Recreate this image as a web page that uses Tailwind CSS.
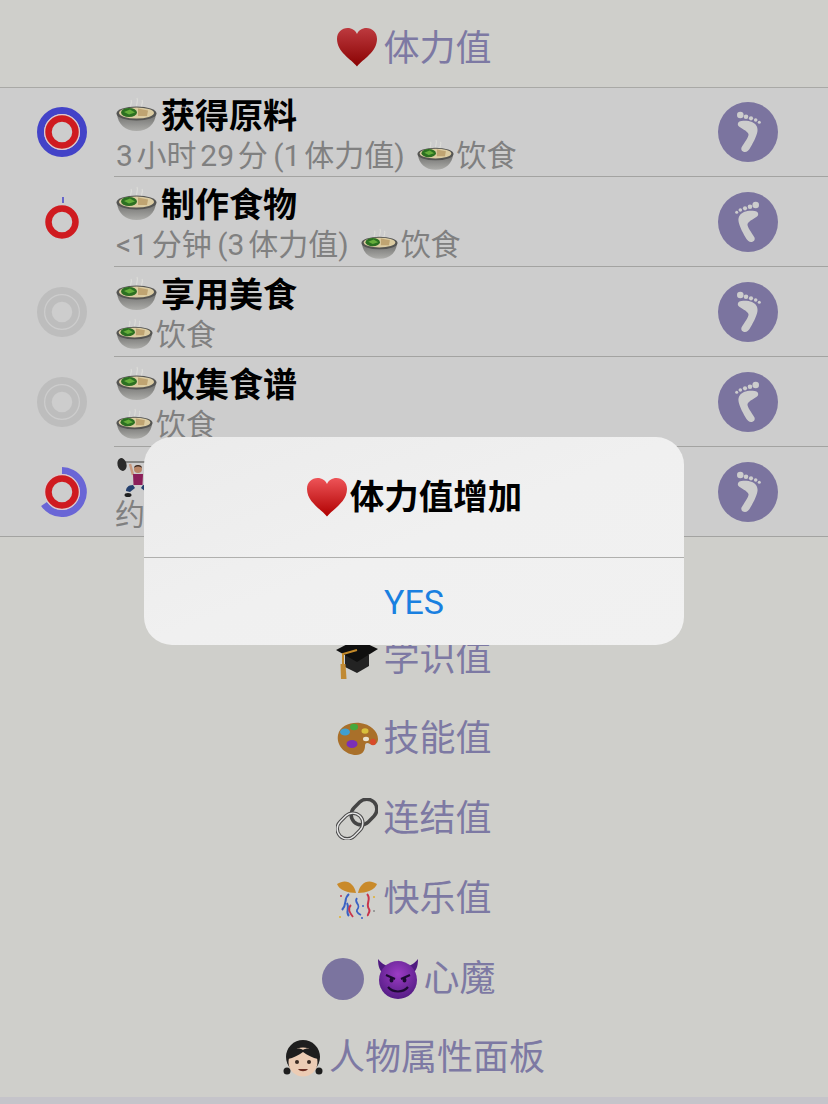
<!DOCTYPE html>
<html lang="zh">
<head>
  <meta charset="UTF-8" />
  <meta name="viewport" content="width=device-width, initial-scale=1" />
  <title>体力值</title>
  <script src="https://cdn.jsdelivr.net/npm/@tailwindcss/browser@4"></script>
</head>
<body class="relative w-[828px] h-[1104px] overflow-hidden bg-[#cfcfcb] font-['Roboto','Noto_Sans_CJK_SC',sans-serif] [text-autospace:normal]">

  <!-- shared emoji and icon drawings -->
  <svg class="absolute w-0 h-0" aria-hidden="true">
    <defs>
      <linearGradient id="heartDim" x1="0" y1="0" x2="0" y2="1"><stop offset="0" stop-color="#bd3a3f"/><stop offset="1" stop-color="#8a0202"/></linearGradient>
      <linearGradient id="heartLit" x1="0" y1="0" x2="0" y2="1"><stop offset="0" stop-color="#ee5458"/><stop offset="1" stop-color="#b00000"/></linearGradient>
      <linearGradient id="bowlBody" x1="0" y1="0" x2="0" y2="1"><stop offset="0" stop-color="#6e6e6c"/><stop offset="1" stop-color="#adadaa"/></linearGradient>
      <radialGradient id="devilFace" cx=".5" cy=".35" r=".7"><stop offset="0" stop-color="#9c3cc4"/><stop offset="1" stop-color="#4f1a80"/></radialGradient>
      <symbol id="heart" viewBox="0 0 42 40"><path d="M21 39.500C15 32 1 25 1 12C1 5 6 1 11.500 1C16 1 19.500 3.500 21 7C22.500 3.500 26 1 30.500 1C36 1 41 5 41 12C41 25 27 32 21 39.500Z"/></symbol>
      <symbol id="bowl" viewBox="0 0 41 34">
        <g fill="none" stroke="#dcdcd8" stroke-width="1.200"><path d="M15 11C13 8 17 6 15 3"/><path d="M21 11C19 7 23 5 21 1"/><path d="M26 11C24 8 28 6 26 3"/></g>
        <path d="M1 17C2 27 9 34 20.500 34C32 34 39 27 40 17Z" fill="url(#bowlBody)"/>
        <ellipse cx="20.500" cy="16.500" rx="20" ry="7" fill="#555553"/>
        <ellipse cx="20.500" cy="16" rx="17.500" ry="5.500" fill="#dccca2"/>
        <ellipse cx="13" cy="15.500" rx="8" ry="4.500" fill="#2b7021"/>
        <path d="M8 15L14 12.500L19 15.500L13 17.500Z" fill="#66ad3a"/>
        <path d="M22 11.500L32 13.500L31 19L22 19Z" fill="#bfa472"/>
      </symbol>
      <symbol id="foot" viewBox="0 0 60 60">
        <circle cx="22.300" cy="13" r="3.300"/><circle cx="28" cy="14.700" r="2.300"/><circle cx="33" cy="16.300" r="2.100"/><circle cx="37.700" cy="18" r="1.800"/><circle cx="41.300" cy="20.300" r="1.500"/>
        <path d="M21 19.700C19.500 21 19.500 23 20.500 24C23 26.500 29 28.500 30.500 32C31 35 26 41 23.500 45.500C22.500 48.500 25 50 27 50C29 50 30.500 48.500 31.500 47C34 43 39 34 39.500 29C40 24.500 37.500 21.500 34 20C30 18.500 24 18.500 21 19.700Z"/>
      </symbol>
    </defs>
  </svg>

  <header class="h-[88px] border-b border-[#a9a9a6] flex items-center justify-center gap-[5px] pt-[10px] text-[36px] leading-[48px] text-[#7d79a3]">
    <svg class="w-[42px] h-[40px] -mt-[4px]" fill="url(#heartDim)"><use href="#heart"/></svg>
    <span>体力值</span>
  </header>

  <main class="bg-[#cdcdcd] border-b border-[#a3a3a1]">
    <!-- row 1 -->
    <div class="h-[89px] flex">
      <div class="w-[114px] pl-[37px] flex items-center">
        <svg class="w-[50px] h-[50px] -mt-[1px]" viewBox="0 0 50 50" fill="none">
          <circle cx="25" cy="25" r="21.500" stroke="#4343c8" stroke-width="7"/>
          <circle cx="25" cy="25" r="17.500" stroke="#e3c6cc" stroke-width="1"/>
          <circle cx="25" cy="25" r="13.500" stroke="#cf1b20" stroke-width="6.500"/>
        </svg>
      </div>
      <div class="flex-1 border-b border-[#a3a3a1] flex">
        <div class="flex-1 pt-[8px]">
          <div class="flex items-end h-[40px] text-[34px] leading-[40px] font-bold text-black"><svg class="ml-[2px] mr-[4px] mb-[5px] w-[41px] h-[34px]"><use href="#bowl"/></svg>获得原料</div>
          <div class="flex items-center h-[38px] mt-[1px] pl-[2px] text-[30px] leading-[38px] text-[#808080] [word-spacing:-2px]">3小时29分 (1体力值)<svg class="ml-[12px] mr-[3px] -mt-[4px] w-[37px] h-[31px]"><use href="#bowl"/></svg>饮食</div>
        </div>
        <div class="pr-[50px] pt-[14px]">
          <svg class="w-[60px] h-[60px] rounded-full bg-[#7b749f]" fill="#cdcdcd"><use href="#foot"/></svg>
        </div>
      </div>
    </div>
    <!-- row 2 -->
    <div class="h-[90px] flex">
      <div class="w-[114px] pl-[37px] flex items-center">
        <svg class="w-[50px] h-[50px]" viewBox="0 0 50 50" fill="none">
          <path d="M26 0V6" stroke="#4343c8" stroke-width="1.500"/>
          <circle cx="25" cy="25" r="13.500" stroke="#cf1b20" stroke-width="6.500"/>
        </svg>
      </div>
      <div class="flex-1 border-b border-[#a3a3a1] flex">
        <div class="flex-1 pt-[8px]">
          <div class="flex items-end h-[40px] text-[34px] leading-[40px] font-bold text-black"><svg class="ml-[2px] mr-[4px] mb-[5px] w-[41px] h-[34px]"><use href="#bowl"/></svg>制作食物</div>
          <div class="flex items-center h-[38px] mt-[1px] pl-[2px] text-[30px] leading-[38px] text-[#808080] [word-spacing:-2px]">&lt;1分钟 (3体力值)<svg class="ml-[12px] mr-[3px] -mt-[4px] w-[37px] h-[31px]"><use href="#bowl"/></svg>饮食</div>
        </div>
        <div class="pr-[50px] pt-[15px]">
          <svg class="w-[60px] h-[60px] rounded-full bg-[#7b749f] -scale-x-100" fill="#cdcdcd"><use href="#foot"/></svg>
        </div>
      </div>
    </div>
    <!-- row 3 -->
    <div class="h-[90px] flex">
      <div class="w-[114px] pl-[37px] flex items-center">
        <svg class="w-[50px] h-[50px]" viewBox="0 0 50 50" fill="none">
          <circle cx="25" cy="25" r="21.500" stroke="#bdbdbd" stroke-width="7"/>
          <circle cx="25" cy="25" r="13.500" stroke="#bdbdbd" stroke-width="6.500"/>
        </svg>
      </div>
      <div class="flex-1 border-b border-[#a3a3a1] flex">
        <div class="flex-1 pt-[8px]">
          <div class="flex items-end h-[40px] text-[34px] leading-[40px] font-bold text-black"><svg class="ml-[2px] mr-[4px] mb-[5px] w-[41px] h-[34px]"><use href="#bowl"/></svg>享用美食</div>
          <div class="flex items-center h-[38px] mt-[1px] pl-[2px] text-[30px] leading-[38px] text-[#808080]"><svg class="mr-[3px] -mt-[4px] w-[37px] h-[31px]"><use href="#bowl"/></svg>饮食</div>
        </div>
        <div class="pr-[50px] pt-[15px]">
          <svg class="w-[60px] h-[60px] rounded-full bg-[#7b749f]" fill="#cdcdcd"><use href="#foot"/></svg>
        </div>
      </div>
    </div>
    <!-- row 4 -->
    <div class="h-[90px] flex">
      <div class="w-[114px] pl-[37px] flex items-center">
        <svg class="w-[50px] h-[50px]" viewBox="0 0 50 50" fill="none">
          <circle cx="25" cy="25" r="21.500" stroke="#bdbdbd" stroke-width="7"/>
          <circle cx="25" cy="25" r="13.500" stroke="#bdbdbd" stroke-width="6.500"/>
        </svg>
      </div>
      <div class="flex-1 border-b border-[#a3a3a1] flex">
        <div class="flex-1 pt-[8px]">
          <div class="flex items-end h-[40px] text-[34px] leading-[40px] font-bold text-black"><svg class="ml-[2px] mr-[4px] mb-[5px] w-[41px] h-[34px]"><use href="#bowl"/></svg>收集食谱</div>
          <div class="flex items-center h-[38px] mt-[1px] pl-[2px] text-[30px] leading-[38px] text-[#808080]"><svg class="mr-[3px] -mt-[4px] w-[37px] h-[31px]"><use href="#bowl"/></svg>饮食</div>
        </div>
        <div class="pr-[50px] pt-[15px]">
          <svg class="w-[60px] h-[60px] rounded-full bg-[#7b749f] -scale-x-100" fill="#cdcdcd"><use href="#foot"/></svg>
        </div>
      </div>
    </div>
    <!-- row 5, title is under the dialog -->
    <div class="h-[89px] flex">
      <div class="w-[114px] pl-[37px] flex items-center">
        <svg class="w-[50px] h-[50px]" viewBox="0 0 50 50" fill="none">
          <path d="M25 3.500A21.500 21.500 0 1 1 7 37" stroke="#6a66d6" stroke-width="7"/>
          <circle cx="25" cy="25" r="17.500" stroke="#e3c6cc" stroke-width="1"/>
          <circle cx="25" cy="25" r="13.500" stroke="#cf1b20" stroke-width="6.500"/>
        </svg>
      </div>
      <div class="flex-1 flex">
        <div class="flex-1 pt-[8px]">
          <div class="flex items-end h-[40px] ml-[2px]">
            <svg class="w-[48px] h-[40px] overflow-visible" viewBox="0 0 48 40">
              <g transform="translate(0 3)">
                <path d="M9 4H37" stroke="#6f6f6d" stroke-width="1.500"/>
                <ellipse cx="6" cy="6.500" rx="4.500" ry="6.500" fill="#2b2b2b" transform="rotate(-15 6 6.500)"/>
                <path d="M14 6L17 17M32 6L29 17" stroke="#c99a80" stroke-width="2.500"/>
                <circle cx="22" cy="11" r="4" fill="#b98668"/>
                <path d="M18 10C18 6 26 6 26 10C24 8 20 8 18 10Z" fill="#3a2a22"/>
                <path d="M17 16H27L26.500 27H17.500Z" fill="#8c1f5a"/>
                <path d="M17 27C12 27 10 30 10 33L14 34L19 30M27 27C32 27 34 30 34 33L30 34L25 30" fill="#24406e"/>
                <ellipse cx="12" cy="37" rx="3.500" ry="2" fill="#1f1f1f"/><ellipse cx="32" cy="37" rx="3.500" ry="2" fill="#1f1f1f"/>
              </g>
            </svg>
          </div>
          <div class="h-[38px] mt-[1px] pl-[1px] text-[30px] leading-[38px] text-[#808080]">约</div>
        </div>
        <div class="pr-[50px] pt-[15px]">
          <svg class="w-[60px] h-[60px] rounded-full bg-[#7b749f]" fill="#cdcdcd"><use href="#foot"/></svg>
        </div>
      </div>
    </div>
  </main>

  <section class="text-[36px] leading-[48px] text-[#7d79a3]">
    <div class="h-[82px]"></div>
    <div class="h-[80px] flex items-center justify-center gap-[5px]">
      <svg class="w-[42px] h-[40px]" viewBox="0 0 42 40">
        <path d="M9 16V28L21 34L33 27V16Z" fill="#232323"/>
        <path d="M21 0L42 10L21 23L0 11Z" fill="#0f0f0f"/>
        <path d="M21 11L7 15V26" fill="none" stroke="#c48a2a" stroke-width="2"/>
        <path d="M4.500 25H9.500L10.500 40H5Z" fill="#c08a34"/>
      </svg>
      <span>学识值</span>
    </div>
    <div class="h-[80px] flex items-center justify-center gap-[5px]">
      <svg class="w-[42px] h-[34px]" viewBox="0 0 42 34">
        <path d="M2 13C4 4 14 0 24 1C34 2 42 9 42 17C42 22 38 24 34 22C31 20 29 21 29 24C29 29 26 33 20 33C10 33 0 24 2 13Z" fill="#a9702a"/>
        <ellipse cx="9" cy="10" rx="5" ry="3.500" fill="#3f9fd0"/>
        <ellipse cx="18" cy="5" rx="4" ry="3.200" fill="#46a83c"/>
        <ellipse cx="29" cy="9" rx="3.500" ry="2.800" fill="#d8c03c"/>
        <ellipse cx="16" cy="22" rx="5.500" ry="4" fill="#7a2fb8"/>
        <ellipse cx="37" cy="20" rx="3" ry="3.200" fill="#d84a2a"/>
        <ellipse cx="30" cy="17" rx="3" ry="2.200" fill="#e8e2d0"/>
      </svg>
      <span>技能值</span>
    </div>
    <div class="h-[80px] flex items-center justify-center gap-[5px]">
      <svg class="w-[42px] h-[42px]" viewBox="0 0 42 42" fill="none">
        <rect x="14" y="4" width="28" height="20" rx="10" transform="rotate(-45 28 14)" stroke="#454545" stroke-width="3.500"/>
        <rect x="0" y="18" width="28" height="20" rx="10" transform="rotate(-45 14 28)" stroke="#4a4a4a" stroke-width="3.500"/>
        <rect x="0" y="18" width="28" height="20" rx="10" transform="rotate(-45 14 28)" stroke="#e8e8e8" stroke-width="1.400"/>
      </svg>
      <span>连结值</span>
    </div>
    <div class="h-[80px] flex items-center justify-center gap-[5px]">
      <svg class="w-[42px] h-[42px]" viewBox="0 0 42 42" fill="none">
        <path d="M20 15C18 5 10 0 1 6C3 12 12 15 20 15Z" fill="#c98a2a"/>
        <path d="M22 15C24 5 32 0 41 6C39 12 30 15 22 15Z" fill="#c98a2a"/>
        <path d="M13 16C7 21 12 25 6 32M11 25C14 30 9 34 13 38" stroke="#3a62c4" stroke-width="2"/>
        <path d="M21 20C17 25 26 26 21 32C20 34 23 36 25 37" stroke="#3a62c4" stroke-width="1.800"/>
        <path d="M31 16C36 21 29 26 33 31C35 34 31 36 32 38" stroke="#c8344a" stroke-width="2"/>
        <path d="M15 27C11 31 14 35 17 39" stroke="#c8344a" stroke-width="1.800"/>
        <circle cx="5" cy="18" r="1" fill="#c8344a"/><circle cx="38" cy="19" r="1" fill="#e0b030"/><circle cx="4" cy="39" r="1" fill="#e0b030"/><circle cx="27" cy="28" r="1" fill="#3a62c4"/><circle cx="26" cy="40" r="1" fill="#3a62c4"/><circle cx="38" cy="33" r="1" fill="#8a8a8a"/>
      </svg>
      <span>快乐值</span>
    </div>
    <div class="h-[80px] flex items-center justify-center pr-[10px]">
      <span class="w-[42px] h-[42px] rounded-full bg-[#7b749f]"></span>
      <svg class="ml-[13px] mr-[4px] w-[42px] h-[40px]" viewBox="0 0 42 40">
        <path d="M1 0C1 8 3 13 8 15L14 8C9 7 5 5 1 0ZM41 0C41 8 39 13 34 15L28 8C33 7 37 5 41 0Z" fill="#4f1a80"/>
        <circle cx="21" cy="21" r="19" fill="url(#devilFace)"/>
        <path d="M9 16L18 20M33 16L24 20" stroke="#1d0a33" stroke-width="2.200"/>
        <ellipse cx="14.500" cy="21" rx="2" ry="2.500" fill="#1d0a33"/><ellipse cx="27.500" cy="21" rx="2" ry="2.500" fill="#1d0a33"/>
        <path d="M11 28C16 34 26 34 31 28" fill="none" stroke="#1d0a33" stroke-width="2.200"/>
      </svg>
      <span>心魔</span>
    </div>
    <div class="h-[78px] flex items-center justify-center gap-[6px]">
      <svg class="w-[40px] h-[38px]" viewBox="0 0 40 38">
        <circle cx="4" cy="32" r="3.500" fill="#1e1e1e"/><circle cx="36" cy="32" r="3.500" fill="#1e1e1e"/>
        <circle cx="20" cy="18" r="17" fill="#1e1e1e"/>
        <circle cx="20" cy="23" r="14.500" fill="#ecccb4"/>
        <path d="M5 20C6 9 16 8 20 11C24 8 34 9 35 20C30 19 24 16 20 13C16 16 10 19 5 20Z" fill="#1e1e1e"/>
        <circle cx="14" cy="23" r="2" fill="#3a2a22"/><circle cx="26" cy="23" r="2" fill="#3a2a22"/>
        <path d="M15 30C17 33 23 33 25 30Z" fill="#6b2e22"/>
      </svg>
      <span>人物属性面板</span>
    </div>
    <div class="h-[7px] bg-[#c5c4ca]"></div>
  </section>

  <!-- alert over the page -->
  <div class="absolute left-[144px] top-[437px] w-[540px] h-[208px] rounded-[28px] bg-linear-to-br from-[#ebebeb] via-[#f0f0f0] to-[#f1f1f1] flex flex-col">
    <div class="h-[121px] border-b border-[#b0b0ae] flex items-center justify-center gap-[2px] text-[34.5px] leading-[44px] font-bold text-black">
      <svg class="w-[42px] h-[40px]" fill="url(#heartLit)"><use href="#heart"/></svg>
      <span>体力值增加</span>
    </div>
    <div class="flex-1 flex items-center justify-center text-[34px] leading-[44px] text-[#1a80e0]">YES</div>
  </div>
</body>
</html>
